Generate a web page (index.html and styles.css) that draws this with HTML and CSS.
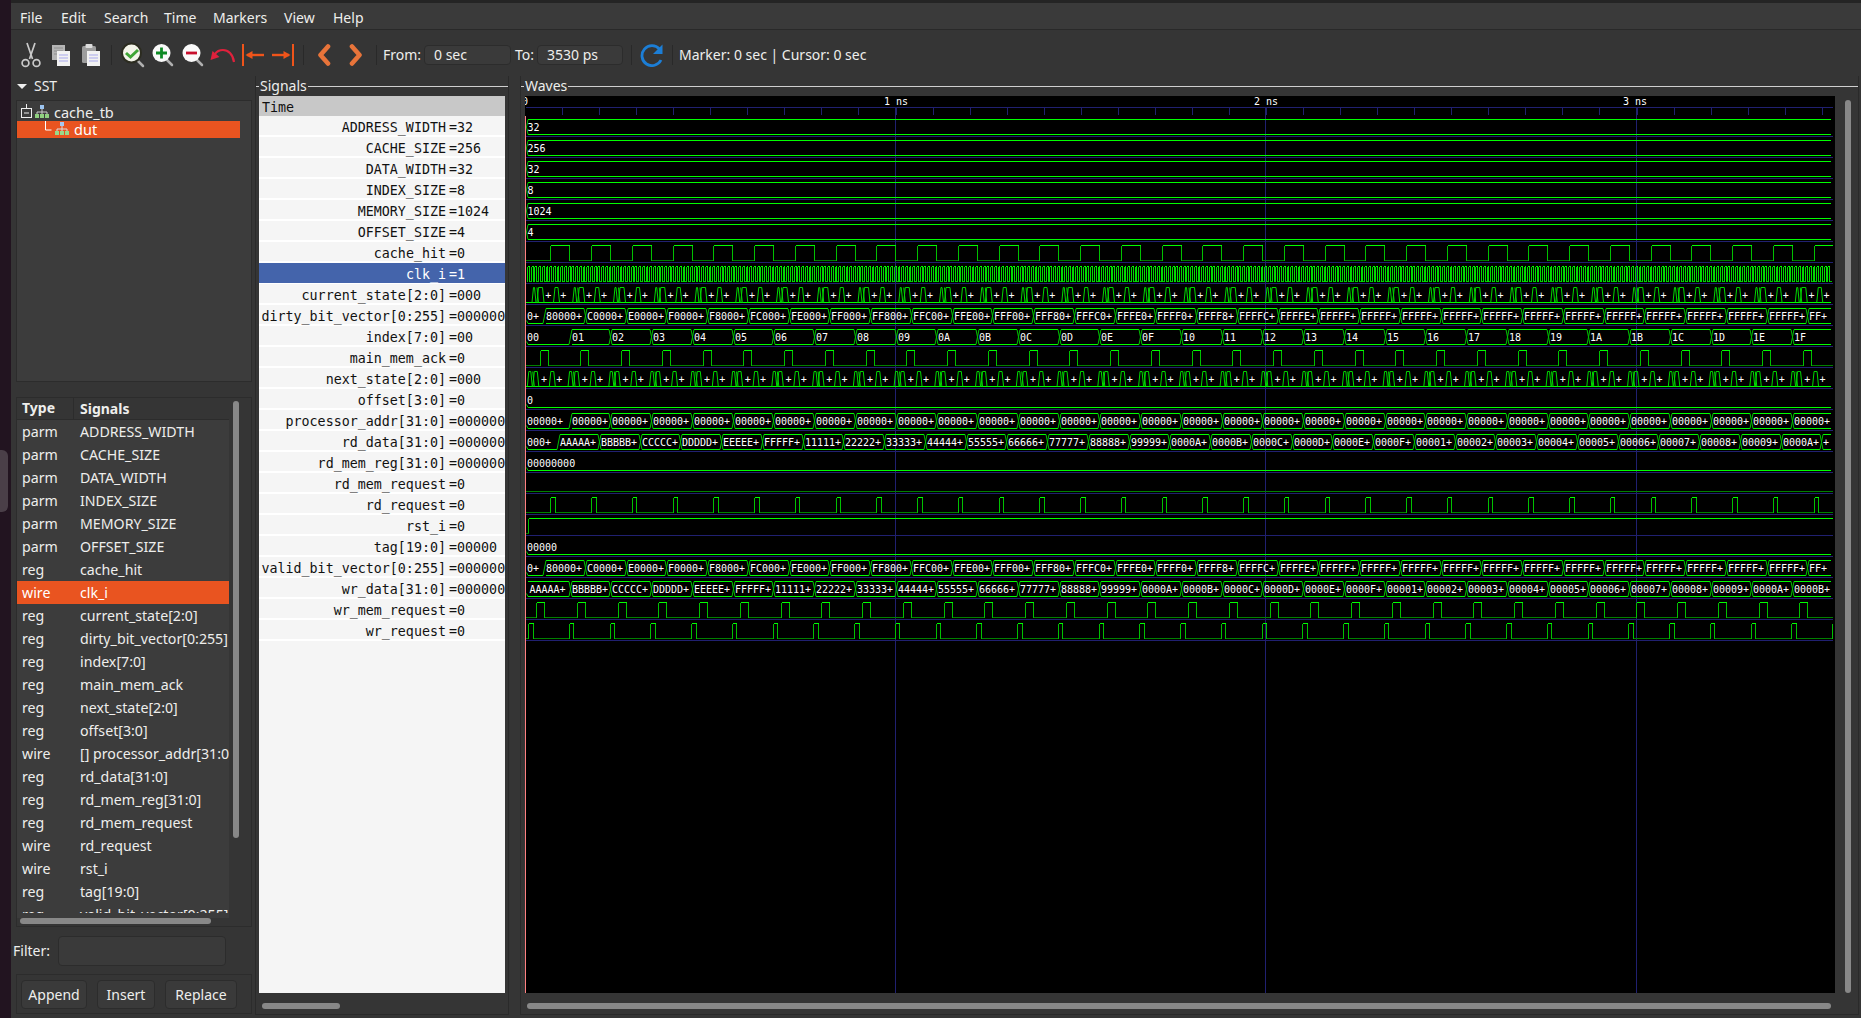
FILE: index.html
```html
<!DOCTYPE html>
<html lang="en">
<head>
<meta charset="utf-8">
<title>GTKWave</title>
<link rel="stylesheet" href="styles.css">
</head>
<body>
<div class="screen">
  <div class="dock"><div class="dock-item"></div></div>
  <div class="app">
    <div class="top-edge"></div>
    <nav class="menubar">
      <span>File</span><span>Edit</span><span>Search</span><span>Time</span><span>Markers</span><span>View</span><span>Help</span>
    </nav>
    <div class="toolbar">
      <div class="tool"><svg width="24" height="26" viewBox="0 0 24 26"><g fill="none" stroke="#c9c9c9" stroke-width="1.7"><path d="M8 1l5.5 16M16 1l-5.500 16"/><circle cx="6.500" cy="21" r="3.400"/><circle cx="17.500" cy="21" r="3.400"/></g></svg></div>
      <div class="tool"><svg width="24" height="24" viewBox="0 0 24 24"><rect x="3" y="2" width="13" height="15" fill="#b5b5b5"/><path d="M5 5h9M5 8h9M5 11h9" stroke="#8e8e8e"/><rect x="8" y="8" width="13" height="15" fill="#f2f2f2"/><path d="M10 12h9M10 15h9M10 18h9" stroke="#a9a9ec"/></svg></div>
      <div class="tool"><svg width="24" height="24" viewBox="0 0 24 24"><rect x="3" y="3" width="14" height="17" rx="1.500" fill="#9d9d9d"/><rect x="6.500" y="1" width="7" height="4" rx="1" fill="#dcdcdc"/><rect x="8" y="8" width="13" height="15" fill="#f2f2f2"/><path d="M10 12h9M10 15h9M10 18h9" stroke="#a9a9ec"/></svg></div>
      <div class="tool-sep first-sep"></div>
      <div class="tool"><svg width="26" height="26" viewBox="0 0 26 26"><path d="M17 18l6 6" stroke="#b0b0b0" stroke-width="2.500" stroke-linecap="round"/><circle cx="11.500" cy="11" r="9.500" fill="#f4f4ea" stroke="#2c2c20" stroke-width="2"/><path d="M6 11l4.500 4 7.500-7" fill="none" stroke="#3fa535" stroke-width="3"/></svg></div>
      <div class="tool"><svg width="24" height="24" viewBox="0 0 24 24"><path d="M15 16l6 6" stroke="#b0b0b0" stroke-width="2.500" stroke-linecap="round"/><circle cx="10.500" cy="10" r="9" fill="#fafafa"/><path d="M5 10h11M10.500 4.500v11" stroke="#0e8a25" stroke-width="2.800"/></svg></div>
      <div class="tool"><svg width="24" height="24" viewBox="0 0 24 24"><path d="M15 16l6 6" stroke="#b0b0b0" stroke-width="2.500" stroke-linecap="round"/><circle cx="10.500" cy="10" r="9" fill="#fafafa"/><path d="M5 10h11" stroke="#c8102e" stroke-width="2.800"/></svg></div>
      <div class="tool"><svg width="26" height="20" viewBox="0 0 26 20"><path d="M24 17c-1-8-6-12-11-12-3 0-6 1-8 4" fill="none" stroke="#e0213c" stroke-width="2.200"/><path d="M0.500 15l2-9 7 6z" fill="#e0213c"/></svg></div>
      <div class="tool"><svg width="24" height="22" viewBox="0 0 24 22"><path d="M2 0v22" stroke="#f0541a" stroke-width="2"/><path d="M6 11h17" stroke="#f0541a" stroke-width="2.400"/><path d="M4.500 11l7-4v8z" fill="#f0541a"/></svg></div>
      <div class="tool"><svg width="24" height="22" viewBox="0 0 24 22"><path d="M22 0v22" stroke="#f0541a" stroke-width="2"/><path d="M1 11h17" stroke="#f0541a" stroke-width="2.400"/><path d="M19.500 11l-7-4v8z" fill="#f0541a"/></svg></div>
      <div class="tool-sep"></div>
      <div class="tool chevron"><svg width="14" height="22" viewBox="0 0 14 22"><path d="M11 2.500L3.500 11l7.500 8.500" fill="none" stroke="#e8743a" stroke-width="4.600" stroke-linejoin="round" stroke-linecap="round"/></svg></div>
      <div class="tool chevron gap-left"><svg width="14" height="22" viewBox="0 0 14 22"><path d="M3 2.500L10.500 11 3 19.500" fill="none" stroke="#e8743a" stroke-width="4.600" stroke-linejoin="round" stroke-linecap="round"/></svg></div>
      <div class="tool-sep"></div>
      <label class="field-label from-label">From:</label><div class="entry from-entry">0 sec</div>
      <label class="field-label to-label">To:</label><div class="entry to-entry">3530 ps</div>
      <div class="tool-sep sep-wide"></div>
      <div class="tool"><svg width="24" height="24" viewBox="0 0 24 24"><path d="M21 17a10 10 0 1 1-1.500-11" fill="none" stroke="#1c7ed6" stroke-width="2.800"/><path d="M22.500 1.500v9.500h-9.500z" fill="#1c7ed6"/></svg></div>
      <div class="tool-sep"></div>
      <div class="marker-text">Marker: 0 sec | Cursor: 0 sec</div>
    </div>

    <main class="panes">
      <section class="sst">
        <div class="sst-head"><span class="triangle"></span><span>SST</span></div>
        <div class="tree">
          <div class="tree-row">
            <svg class="tree-expander" width="34" height="17" viewBox="0 0 34 17"><g fill="none" stroke="#eeeeee"><path d="M9.500 0v4"/><rect x="4.500" y="4.500" width="10" height="9"/><path d="M7 9h5"/></g><rect x="23" y="1" width="4" height="4" fill="#9cc4f0"/><path d="M25 5v3M20 8h10M20 8v2M25 8v2M30 8v2" stroke="#cccccc"/><rect x="18" y="10" width="4" height="4" fill="#8fd07f"/><rect x="23" y="10" width="4" height="4" fill="#8fd07f"/><rect x="28" y="10" width="4" height="4" fill="#8fd07f"/></svg>
            <span>cache_tb</span>
          </div>
          <div class="tree-row selected child">
            <svg width="34" height="17" viewBox="0 0 34 17"><path d="M8.500 0v9h6" fill="none" stroke="#fff"/><rect x="23" y="1" width="4" height="4" fill="#a8c8ef"/><path d="M25 5v3M20 8h10M20 8v2M25 8v2M30 8v2" stroke="#dddddd"/><rect x="18" y="10" width="4" height="4" fill="#9ad98a"/><rect x="23" y="10" width="4" height="4" fill="#9ad98a"/><rect x="28" y="10" width="4" height="4" fill="#9ad98a"/></svg>
            <span>dut</span>
          </div>
        </div>

        <div class="sig-list">
          <div class="sig-main">
            <div class="sig-table">
              <div class="sig-header"><span class="col-type">Type</span><span class="col-name">Signals</span></div>
              <div class="sig-body">
                <div class="sig-item"><span class="col-type">parm</span><span class="col-name">ADDRESS_WIDTH</span></div>
                <div class="sig-item"><span class="col-type">parm</span><span class="col-name">CACHE_SIZE</span></div>
                <div class="sig-item"><span class="col-type">parm</span><span class="col-name">DATA_WIDTH</span></div>
                <div class="sig-item"><span class="col-type">parm</span><span class="col-name">INDEX_SIZE</span></div>
                <div class="sig-item"><span class="col-type">parm</span><span class="col-name">MEMORY_SIZE</span></div>
                <div class="sig-item"><span class="col-type">parm</span><span class="col-name">OFFSET_SIZE</span></div>
                <div class="sig-item"><span class="col-type">reg</span><span class="col-name">cache_hit</span></div>
                <div class="sig-item selected"><span class="col-type">wire</span><span class="col-name">clk_i</span></div>
                <div class="sig-item"><span class="col-type">reg</span><span class="col-name">current_state[2:0]</span></div>
                <div class="sig-item"><span class="col-type">reg</span><span class="col-name">dirty_bit_vector[0:255]</span></div>
                <div class="sig-item"><span class="col-type">reg</span><span class="col-name">index[7:0]</span></div>
                <div class="sig-item"><span class="col-type">reg</span><span class="col-name">main_mem_ack</span></div>
                <div class="sig-item"><span class="col-type">reg</span><span class="col-name">next_state[2:0]</span></div>
                <div class="sig-item"><span class="col-type">reg</span><span class="col-name">offset[3:0]</span></div>
                <div class="sig-item"><span class="col-type">wire</span><span class="col-name">[] processor_addr[31:0]</span></div>
                <div class="sig-item"><span class="col-type">reg</span><span class="col-name">rd_data[31:0]</span></div>
                <div class="sig-item"><span class="col-type">reg</span><span class="col-name">rd_mem_reg[31:0]</span></div>
                <div class="sig-item"><span class="col-type">reg</span><span class="col-name">rd_mem_request</span></div>
                <div class="sig-item"><span class="col-type">wire</span><span class="col-name">rd_request</span></div>
                <div class="sig-item"><span class="col-type">wire</span><span class="col-name">rst_i</span></div>
                <div class="sig-item"><span class="col-type">reg</span><span class="col-name">tag[19:0]</span></div>
                <div class="sig-item"><span class="col-type">reg</span><span class="col-name">valid_bit_vector[0:255]</span></div>
              </div>
            </div>
            <div class="vscroll list-vscroll"></div>
          </div>
          <div class="hscroll list-hscroll"></div>
        </div>

        <div class="filter"><label>Filter:</label><div class="entry filter-entry"></div></div>
        <div class="actions">
          <div class="btn append">Append</div><div class="btn insert">Insert</div><div class="btn replace">Replace</div>
        </div>
      </section>

      <section class="frame signals">
        <div class="frame-head"><span>Signals</span></div>
        <div class="signal-pane">
          <div class="time-row">Time</div>
          <div class="sr"><span class="sn">ADDRESS_WIDTH</span><span class="sv">=32</span></div>
          <div class="sr"><span class="sn">CACHE_SIZE</span><span class="sv">=256</span></div>
          <div class="sr"><span class="sn">DATA_WIDTH</span><span class="sv">=32</span></div>
          <div class="sr"><span class="sn">INDEX_SIZE</span><span class="sv">=8</span></div>
          <div class="sr"><span class="sn">MEMORY_SIZE</span><span class="sv">=1024</span></div>
          <div class="sr"><span class="sn">OFFSET_SIZE</span><span class="sv">=4</span></div>
          <div class="sr"><span class="sn">cache_hit</span><span class="sv">=0</span></div>
          <div class="sr active"><span class="sn">clk_i</span><span class="sv">=1</span></div>
          <div class="sr"><span class="sn">current_state[2:0]</span><span class="sv">=000</span></div>
          <div class="sr"><span class="sn">dirty_bit_vector[0:255]</span><span class="sv">=000000</span></div>
          <div class="sr"><span class="sn">index[7:0]</span><span class="sv">=00</span></div>
          <div class="sr"><span class="sn">main_mem_ack</span><span class="sv">=0</span></div>
          <div class="sr"><span class="sn">next_state[2:0]</span><span class="sv">=000</span></div>
          <div class="sr"><span class="sn">offset[3:0]</span><span class="sv">=0</span></div>
          <div class="sr"><span class="sn">processor_addr[31:0]</span><span class="sv">=000000</span></div>
          <div class="sr"><span class="sn">rd_data[31:0]</span><span class="sv">=000000</span></div>
          <div class="sr"><span class="sn">rd_mem_reg[31:0]</span><span class="sv">=000000</span></div>
          <div class="sr"><span class="sn">rd_mem_request</span><span class="sv">=0</span></div>
          <div class="sr"><span class="sn">rd_request</span><span class="sv">=0</span></div>
          <div class="sr"><span class="sn">rst_i</span><span class="sv">=0</span></div>
          <div class="sr"><span class="sn">tag[19:0]</span><span class="sv">=00000</span></div>
          <div class="sr"><span class="sn">valid_bit_vector[0:255]</span><span class="sv">=000000</span></div>
          <div class="sr"><span class="sn">wr_data[31:0]</span><span class="sv">=000000</span></div>
          <div class="sr"><span class="sn">wr_mem_request</span><span class="sv">=0</span></div>
          <div class="sr"><span class="sn">wr_request</span><span class="sv">=0</span></div>
        </div>
        <div class="pane-scroll"><div class="hscroll signal-hscroll"></div></div>
      </section>

      <section class="frame waves">
        <div class="frame-head"><span>Waves</span></div>
        <div class="wave-body">
          <svg id="wave" class="wave-canvas" width="1310" height="897" viewBox="525 96 1310 897"></svg>
          <div class="wave-side"><div class="vscroll wave-vscroll"></div></div>
        </div>
        <div class="pane-scroll wave-foot"><div class="hscroll wave-hscroll"></div></div>
      </section>
    </main>
  </div>
</div>
<script src="waves.js"></script>
</body>
</html>
```

FILE: styles.css
```css
* { box-sizing: border-box; }
html, body { margin: 0; padding: 0; height: 100%; overflow: hidden; }
body { background: #353535; color: #eeeeec; font: 14px/1.2 "Noto Sans", sans-serif; }

.screen { display: flex; width: 1861px; height: 1018px; overflow: hidden; }
.dock { width: 11px; flex: none; background: #221420; padding-top: 450px; }
.dock-item { width: 8px; height: 62px; background: #4a3f48; border-radius: 0 6px 6px 0; }
.app { flex: 1; display: flex; flex-direction: column; min-width: 0; }
.top-edge { height: 3px; background: #242424; flex: none; }

.menubar { height: 27px; flex: none; background: #3a3a3a; border-bottom: 1px solid #292929; display: flex; align-items: center; font-size: 14px; padding: 5px 0 0 9px; }
.menubar span { flex: none; }
.menubar span:nth-child(1) { width: 41px; }
.menubar span:nth-child(2) { width: 43px; }
.menubar span:nth-child(3) { width: 60px; }
.menubar span:nth-child(4) { width: 49px; }
.menubar span:nth-child(5) { width: 71px; }
.menubar span:nth-child(6) { width: 49px; }

.toolbar { height: 46px; flex: none; display: flex; align-items: center; padding: 4px 0 0 5px; background: #353535; }
.tool { width: 30px; height: 40px; flex: none; display: flex; align-items: center; justify-content: center; }
.tool-sep { width: 1px; height: 20px; flex: none; background: #292929; margin: 0 5px; }
.first-sep { margin-right: 6px; }
.sep-wide { margin-left: 8px; }
.gap-left { margin-left: 2px; }
.field-label { flex: none; }
.from-label { margin-left: 1px; width: 41px; }
.to-label { margin-left: 4px; width: 22px; }
.entry { flex: none; background: #3a3a3a; border: 1px solid #2c2c2c; border-radius: 4px; padding-left: 9px; }
.from-entry { width: 87px; height: 20px; line-height: 18px; }
.to-entry { width: 86px; height: 20px; line-height: 18px; }
.marker-text { margin-left: 1px; flex: none; white-space: pre; }

.panes { flex: 1; min-height: 0; display: grid; grid-template-columns: 244px 254px 1fr; }

.sst { display: flex; flex-direction: column; padding-left: 5px; padding-right: 3px; min-width: 0; }
.sst-head { height: 24px; flex: none; display: flex; align-items: center; gap: 7px; padding: 0 0 4px 1px; }
.triangle { width: 0; height: 0; border-left: 5px solid transparent; border-right: 5px solid transparent; border-top: 5px solid #eee; }
.tree { height: 282px; flex: none; background: #3c3c3c; border: 1px solid #2c2c2c; padding-top: 3px; }
.tree-row { height: 17px; display: flex; align-items: center; gap: 3px; line-height: 17px; font-size: 14.5px; }
.tree-row svg { flex: none; }
.tree-row span { padding-bottom: 1px; }
.tree-row.child { width: 223px; padding-left: 20px; }
.tree-row.selected { background: #e95420; color: #fff; }

.sig-list { margin-top: 15px; height: 530px; flex: none; border: 1px solid #2c2c2c; display: flex; flex-direction: column; }
.sig-main { flex: 1; min-height: 0; display: flex; }
.sig-table { width: 212px; flex: none; display: flex; flex-direction: column; overflow: hidden; background: #3c3c3c; }
.sig-header { height: 22px; flex: none; background: #353535; border-bottom: 1px solid #2c2c2c; display: flex; align-items: center; font-weight: 700; line-height: 20px; }
.sig-body { height: 493px; overflow: hidden; font-size: 14.2px; }
.sig-item { height: 23px; display: flex; align-items: center; white-space: nowrap; }
.sig-item span { padding-top: 1px; }
.sig-item.selected { background: #e95420; color: #fff; }
.col-type { width: 57px; flex: none; padding-left: 5px; }
.col-name { padding-left: 6px; flex: none; }
.sig-header .col-type { border-right: 1px solid #2c2c2c; height: 21px; }

.vscroll { background: #888; border-radius: 3px; width: 6px; }
.hscroll { background: #888; border-radius: 3px; height: 6px; }
.list-vscroll { margin: 3px 0 0 4px; height: 437px; }
.list-hscroll { width: 191px; margin: 0 0 2px 3px; flex: none; }

.filter { height: 47px; flex: none; display: flex; align-items: center; gap: 5px; margin-left: -3px; }
.filter label { width: 40px; padding-top: 2px; flex: none; }
.filter-entry { width: 168px; height: 30px; }
.actions { height: 40px; flex: none; border: 1px solid #2c2c2c; display: flex; align-items: center; padding-left: 4px; }
.btn { height: 29px; padding-top: 2px; background: #3a3a3a; border: 1px solid #2c2c2c; border-radius: 4px; display: flex; align-items: center; justify-content: center; flex: none; }
.append { width: 66px; }
.insert { width: 58px; margin-left: 10px; }
.replace { width: 72px; margin-left: 10px; }

.frame { display: flex; flex-direction: column; min-width: 0; height: 939px; border: 1px solid #2a2a2a; border-top: 0; }
.frame-head { height: 20px; flex: none; display: flex; align-items: center; gap: 1px; line-height: 20px; }
.frame-head::before { content: ""; width: 3px; height: 1px; background: #cfcfcf; flex: none; }
.frame-head::after { content: ""; flex: 1; height: 1px; background: #cfcfcf; }
.waves { margin: 0 2px 0 11px; }

.signal-pane { height: 897px; flex: none; margin: 0 3px; background: #f5f5f5; overflow: hidden; font: 13.33px/23px "DejaVu Sans Mono", monospace; color: #111; }
.time-row { height: 20px; background: #c8c8c8; padding-left: 3px; line-height: 23px; }
.sr { height: 21px; border-bottom: 2px solid #fff; display: flex; white-space: nowrap; }
.sr .sn { width: 187px; flex: none; text-align: right; }
.sr .sv { padding-left: 3px; flex: none; }
.sr.active { background: #4464ab; color: #fff; border-bottom: 1px solid #fff; }

.pane-scroll { flex: 1; padding: 10px 0 0 6px; }
.signal-hscroll { width: 78px; }

.wave-body { height: 897px; flex: none; display: flex; padding-left: 4px; }
.wave-canvas { display: block; flex: none; background: #000; }
.wave-side { width: 23px; flex: none; padding: 4px 0 0 10px; }
.wave-vscroll { height: 893px; }
.wave-foot { padding-left: 6px; }
.wave-hscroll { width: 1304px; }

.wave-text { font: 10px "DejaVu Sans Mono", monospace; fill: #fff; }
.w-crisp { shape-rendering: crispEdges; fill: none; }
.w-soft { fill: none; }
```

FILE: waves.js
```javascript
(function () {
  var svg = document.getElementById('wave');
  var out = [];
  var END = 1831, END2 = 1833;
  var PITCH = 40.75;
  var HI = function (i) { return 119.5 + 21 * i; };
  var LO = function (i) { return 134.5 + 21 * i; };
  var snap = function (x) { return Math.round(x) + 0.5; };

  function crisp(d, color) { out.push('<path class="w-crisp" stroke="' + color + '" d="' + d + '"/>'); }
  function soft(d, color) { out.push('<path class="w-soft" stroke="' + color + '" d="' + d + '"/>'); }
  function text(x, y, s) { out.push('<text class="wave-text" x="' + x + '" y="' + y + '">' + s + '</text>'); }
  function label(x, i, s) { text(x, HI(i) + 11.2, s); }

  // grid and ruler
  var GRID = '#202070';
  [895, 1265, 1636].forEach(function (x) { crisp('M' + (x + 0.5) + ' 107V993', GRID); });
  crisp('M526 107.5H1833', GRID);
  for (var t = 1; t < 36; t++) {
    var tx = snap(525 + 37.05 * t);
    crisp('M' + tx + ' 107V115', GRID);
  }
  for (var r = 0; r < 25; r++) crisp('M526 ' + (136.5 + 21 * r) + 'H1833', GRID);
  crisp('M525.5 116V993', '#ff8080');

  text(522, 105, '0');
  text(884, 105, '1 ns');
  text(1254, 105, '2 ns');
  text(1623, 105, '3 ns');

  // parameter rows: constant boxed values
  [['32', 0], ['256', 1], ['32', 2], ['8', 3], ['1024', 4], ['4', 5]].forEach(function (p) {
    var i = p[1];
    crisp('M528 ' + HI(i) + 'H' + END + 'M528 ' + LO(i) + 'H' + END, '#00ff00');
    soft('M528 ' + HI(i) + 'L526.500 ' + (HI(i) + 7.5) + 'L528 ' + LO(i), '#00c000');
    label(527.5, i, p[0]);
  });

  // periodic single-bit rows
  function pulses(i, offset, width) {
    var hi = '', lo = '', tr = '', x = 526;
    for (var n = 0; n < 33; n++) {
      var a = snap(525 + offset + PITCH * n), b = snap(525 + offset + width + PITCH * n);
      if (a > END2) break;
      lo += 'M' + x + ' ' + LO(i) + 'H' + a;
      tr += 'M' + a + ' ' + LO(i) + 'V' + HI(i);
      if (b > END2) { hi += 'M' + a + ' ' + HI(i) + 'H' + END2; x = END2; break; }
      hi += 'M' + a + ' ' + HI(i) + 'H' + b;
      tr += 'M' + b + ' ' + HI(i) + 'V' + LO(i);
      x = b;
    }
    if (x < END2) lo += 'M' + x + ' ' + LO(i) + 'H' + END2;
    crisp(lo, '#008000'); crisp(tr, '#00c000'); crisp(hi, '#00ff00');
  }
  pulses(6, 25.3, 19);
  pulses(11, 14.5, 8);
  pulses(18, 25.3, 4.5);
  pulses(23, 11, 8);
  pulses(24, 3, 4.5);

  // clk_i comb
  (function () {
    var i = 7, hi = '', lo = '', tr = '';
    for (var n = 0; n < 352; n++) {
      var a = snap(527 + 3.705 * n), b = snap(527 + 3.705 * n + 1.85), c = snap(527 + 3.705 * (n + 1));
      if (c > END2) break;
      tr += 'M' + a + ' ' + LO(i) + 'V' + HI(i) + 'M' + b + ' ' + HI(i) + 'V' + LO(i);
      hi += 'M' + a + ' ' + HI(i) + 'H' + b;
      lo += 'M' + b + ' ' + LO(i) + 'H' + c;
    }
    crisp(lo, '#00c000'); crisp(tr, '#00dc00'); crisp(hi, '#00ff00');
  })();

  // bus rows
  function bus(i, first, firstZero, t0, labels) {
    var top = '', bot = '', diag = '';
    var H = HI(i), L = LO(i);
    var count = labels.length;
    label(527, i, first);
    var start = 528;
    var x0 = snap(t0);
    if (!firstZero) top += 'M' + start + ' ' + H + 'H' + (x0 - 1.5);
    bot += 'M' + start + ' ' + L + 'H' + (x0 - 1.5);
    soft('M526.500 ' + (L - 3) + 'L528 ' + L, '#00c000');
    for (var n = 0; n < count; n++) {
      var s = snap(t0 + PITCH * n);
      var e = n + 1 < count ? snap(t0 + PITCH * (n + 1)) : END + 1.5;
      top += 'M' + (s + 1.5) + ' ' + H + 'H' + (e - 1.5);
      bot += 'M' + (s + 1.5) + ' ' + L + 'H' + (e - 1.5);
      diag += 'M' + (s - 1.5) + ' ' + L + 'L' + (s + 1.5) + ' ' + H;
      if (n > 0 || !firstZero) diag += 'M' + (s - 1.5) + ' ' + H + 'L' + (s + 1.5) + ' ' + L;
      label(s + 1.5, i, labels[n]);
    }
    crisp(top, '#00ff00'); crisp(bot, '#00ff00'); soft(diag, '#00c000');
  }

  var hex = '0123456789ABCDEF';
  var indexLabels = [];
  for (var k = 1; k < 32; k++) indexLabels.push(hex[k >> 4] + hex[k & 15]);
  bus(10, '00', true, 569.5, indexLabels);

  var procLabels = [];
  for (k = 0; k < 31; k++) procLabels.push('00000+');
  bus(14, '00000+', true, 569.5, procLabels);

  var vec = ['80000+','C0000+','E0000+','F0000+','F8000+','FC000+','FE000+','FF000+','FF800+','FFC00+','FFE00+','FFF00+','FFF80+','FFFC0+','FFFE0+','FFFF0+','FFFF8+','FFFFC+','FFFFE+'];
  for (k = 0; k < 12; k++) vec.push('FFFFF+');
  vec.push('FF+');
  bus(9, '0+', true, 544, vec);
  bus(21, '0+', true, 544, vec);

  var dataSeq = ['AAAAA+','BBBBB+','CCCCC+','DDDDD+','EEEEE+','FFFFF+','11111+','22222+','33333+','44444+','55555+','66666+','77777+','88888+','99999+','0000A+','0000B+','0000C+','0000D+','0000E+','0000F+','00001+','00002+','00003+','00004+','00005+','00006+','00007+','00008+','00009+','0000A+','0000B+'];
  var rd = dataSeq.slice(0, 31); rd.push('+');
  bus(15, '000+', true, 558, rd);
  bus(22, '', false, 569.5, dataSeq.slice(1));
  label(529.5, 22, dataSeq[0]);

  // flat zero vector rows
  [[13, '0'], [16, '00000000'], [20, '00000']].forEach(function (p) {
    crisp('M528 ' + LO(p[0]) + 'H' + END, '#00ff00');
    soft('M526.500 ' + (LO(p[0]) - 3) + 'L528 ' + LO(p[0]), '#00c000');
    label(527, p[0], p[1]);
  });

  // flat single-bit rows
  crisp('M526 ' + LO(17) + 'H' + END2, '#008000');
  crisp('M528.500 ' + LO(19) + 'V' + HI(19), '#00c000');
  crisp('M526 ' + LO(19) + 'H528.500', '#008000');
  crisp('M528.500 ' + HI(19) + 'H' + END2, '#00ff00');

  // state rows
  function state(i, c0, h1, hexA, hexB, h2A, h2B, p1, p2) {
    var H = HI(i), L = LO(i), d = '', base = 'M526 ' + L + 'H' + END;
    for (var n = 0; n < 32; n++) {
      var c = c0 + PITCH * n;
      if (c + p2 > END) break;
      d += 'M' + c + ' ' + L + 'L' + (c + 1.5) + ' ' + H + 'L' + (c + h1 - 1.5) + ' ' + H + 'L' + (c + h1) + ' ' + L;
      d += 'M' + (c + hexA) + ' ' + L + 'L' + (c + hexA + 1.5) + ' ' + H + 'L' + (c + hexB - 1.5) + ' ' + H + 'L' + (c + hexB) + ' ' + L;
      d += 'M' + (c + hexA) + ' ' + H + 'L' + (c + hexA + 1.5) + ' ' + L;
      d += 'M' + (c + h2A) + ' ' + L + 'L' + (c + h2A + 1.5) + ' ' + H + 'L' + (c + h2B - 1.5) + ' ' + H + 'L' + (c + h2B) + ' ' + L;
      label(c + p1 - 3, i, '+');
      label(c + p2 - 3, i, '+');
    }
    crisp(base, '#00ff00');
    soft(d, '#00d800');
  }
  state(8, 532, 4, 5, 12, 21.5, 27.5, 16.3, 31.3);
  state(12, 527.3, 5, 5.5, 11.5, 22, 28, 16.7, 32);

  svg.innerHTML = out.join('');
})();
```
